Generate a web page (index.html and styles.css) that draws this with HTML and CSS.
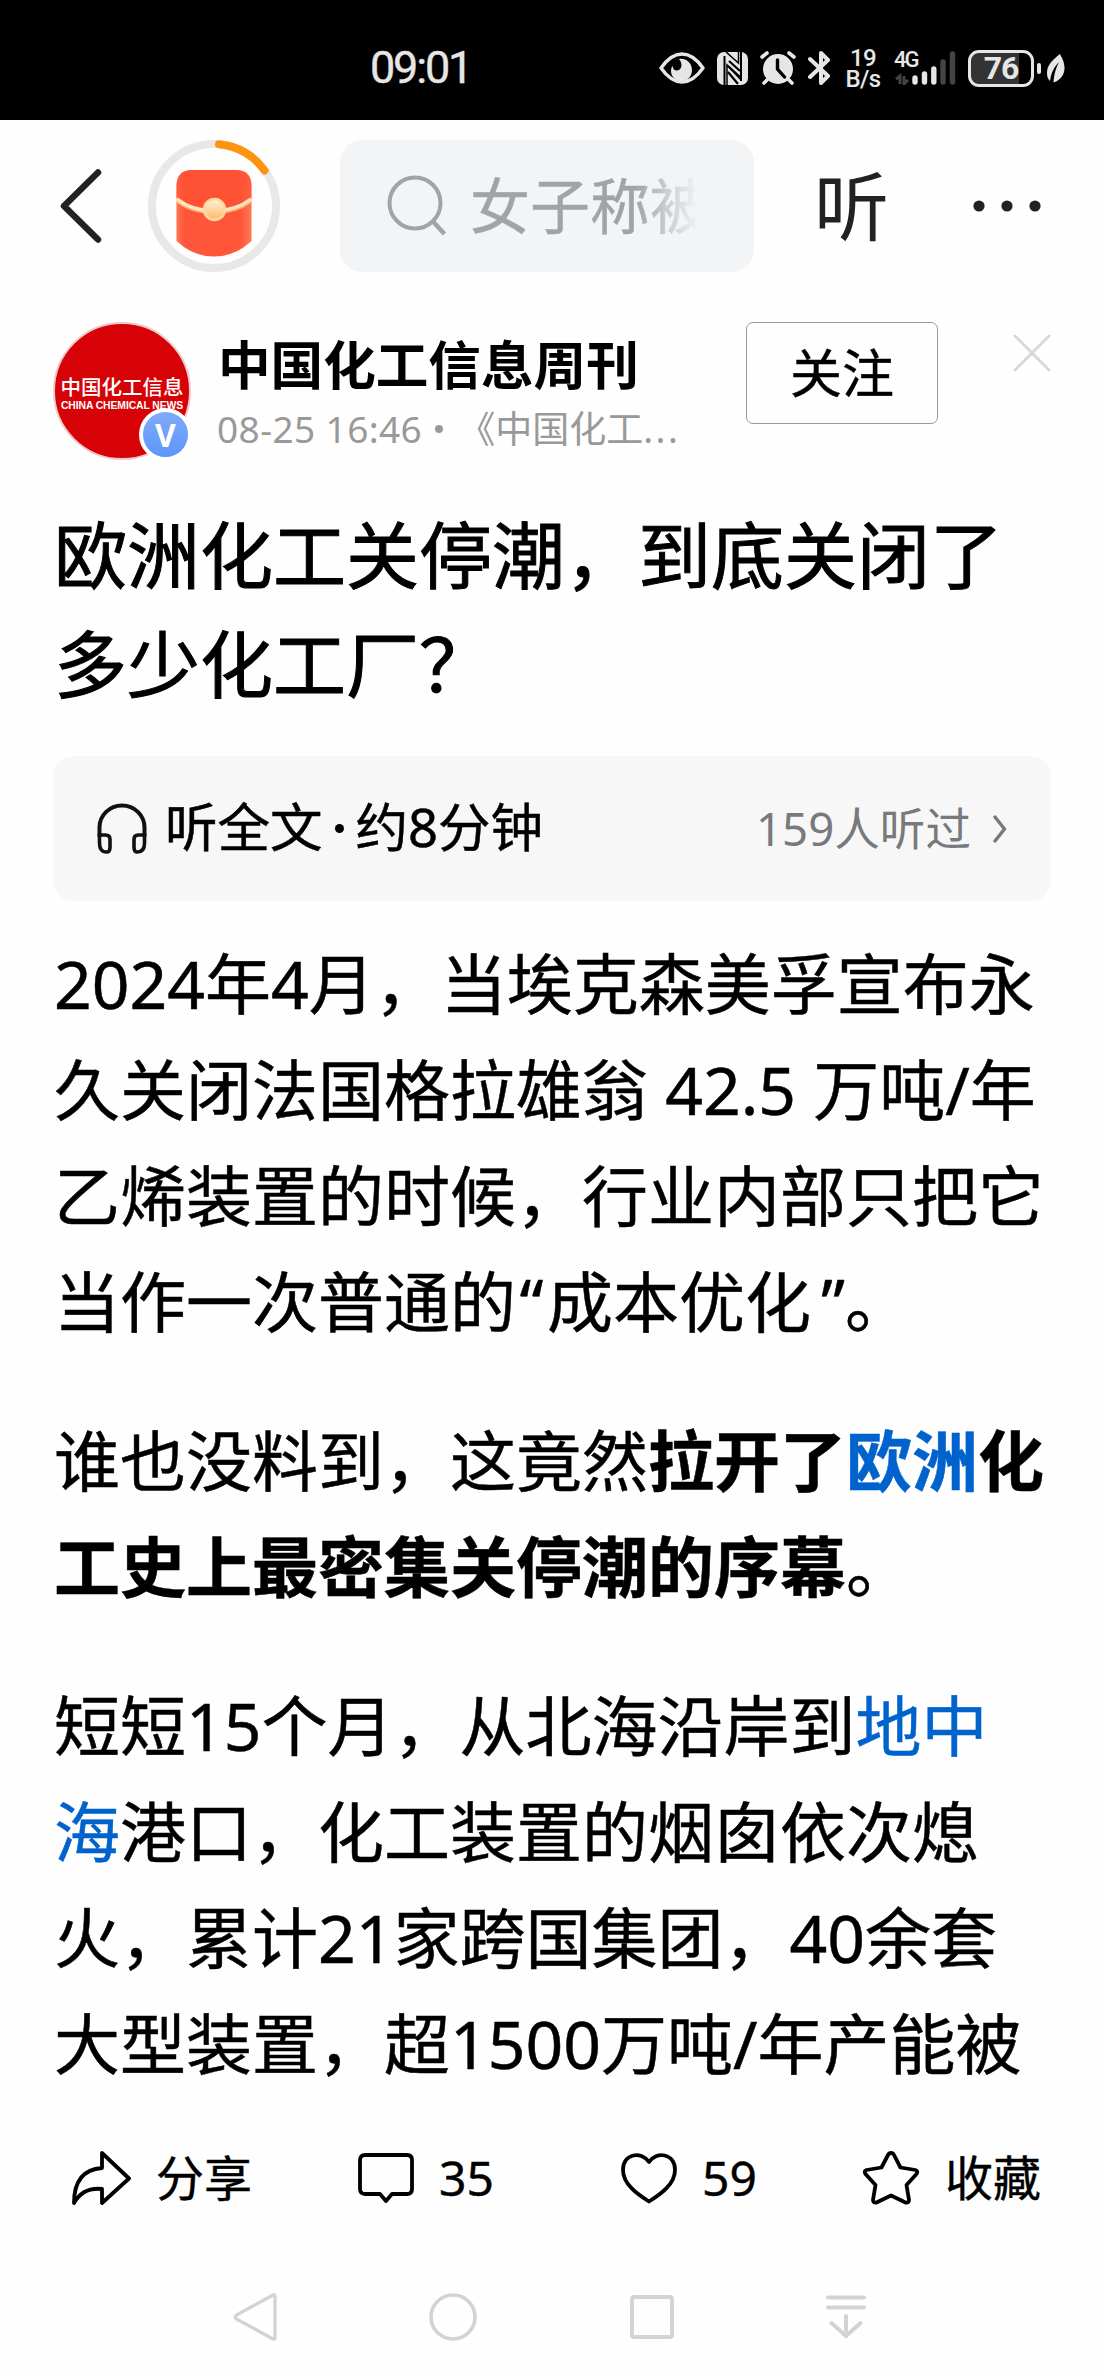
FILE: index.html
```html
<!DOCTYPE html>
<html lang="zh-CN">
<head>
    <meta charset="UTF-8">
    <meta name="viewport" content="width=device-width, initial-scale=1.0">
    <title>欧洲化工关停潮，到底关闭了多少化工厂？</title>
    <link rel="stylesheet" href="styles.css">
</head>
<body>
    <div class="status-bar">
        <span class="status-time">09:01</span>
        <div class="status-icons">
            <svg class="icon-eye" width="46" height="32" viewBox="0 0 46 32">
                <path d="M2 16C9 6 16 2 23 2s14 4 21 14c-7 10-14 14-21 14S9 26 2 16z" fill="none" stroke="#e6e6e6" stroke-width="3.4" stroke-linejoin="round"/>
                <path d="M20 7c7-1 13 4 13 11 0 6-4 11-10 11s-11-4-11-10c0-2 .5-4 1.500-5 .5 3 2 4.500 4 4.500 5 0 7-6 2.500-11.500z" fill="#e6e6e6"/>
            </svg>
            <svg class="icon-nfc" width="31" height="33" viewBox="0 0 31 33">
                <rect width="31" height="33" rx="7" fill="#e6e6e6"/>
                <path d="M7.500 4v29M24 0v29" stroke="#000" stroke-width="2"/>
                <path d="M8 1l15 15V1h-3v10zM23 32L10 16v16z" fill="#e6e6e6"/>
                <path d="M21.500 0v11L9 0M10 33V13l14 15" fill="none" stroke="#000" stroke-width="1.500"/>
                <path d="M11 14l12 11M11 20l10 12M12 9l11 10" stroke="#000" stroke-width="2.200"/>
            </svg>
            <svg class="icon-alarm" width="36" height="34" viewBox="0 0 36 34">
                <circle cx="18" cy="18" r="15" fill="#e6e6e6"/>
                <path d="M2 6l5-4M34 6l-5-4M7 29l-3 3M29 29l3 3" stroke="#e6e6e6" stroke-width="3.600" stroke-linecap="round"/>
                <path d="M17.500 9v9l7 8" fill="none" stroke="#000" stroke-width="3.400" stroke-linecap="round"/>
            </svg>
            <svg class="icon-bluetooth" width="23" height="36" viewBox="0 0 23 36">
                <path d="M2 9l18 17-7 7V3l7 7L2 27" fill="none" stroke="#e6e6e6" stroke-width="4" stroke-linejoin="round" stroke-linecap="round"/>
            </svg>
            <div class="net-speed">
                <span>19</span>
                <span>B/s</span>
            </div>
            <div class="signal">
                <span class="signal-type">4G</span>
                <svg width="63" height="34" viewBox="0 0 63 34">
                    <path d="M6 33V25l-4 3M10 25v8l4-4" fill="none" stroke="#444" stroke-width="3"/>
                    <path d="M21 27v4M30.500 23v8M39.800 18v13" stroke="#e6e6e6" stroke-width="5.400" stroke-linecap="round"/>
                    <path d="M49 11v20M58.500 3v28" stroke="#444" stroke-width="5.400" stroke-linecap="round"/>
                </svg>
            </div>
            <div class="battery">
                <span class="battery-level">76</span>
            </div>
            <span class="battery-tip"></span>
            <svg class="icon-leaf" width="18" height="29" viewBox="0 0 18 29">
                <path d="M13 0C4 7 0 12 0 19c0 4 1 6 3 8C4 19 7 13 12 8 9 14 7 20 6.500 28.500 14 26 18 20 17.500 13 17 7 15 4 13 0z" fill="#e6e6e6"/>
            </svg>
        </div>
    </div>

    <div class="top-bar">
        <svg class="back" width="42" height="76" viewBox="0 0 42 76">
            <path d="M38 4.500L4 38l34 33.500" fill="none" stroke="#222" stroke-width="6.500" stroke-linecap="round" stroke-linejoin="round"/>
        </svg>
        <svg class="packet" width="132" height="132" viewBox="0 0 132 132">
            <defs>
                <linearGradient id="red" x1="0" x2="1" y1="0" y2="0">
                    <stop offset="0" stop-color="#ff7350"/>
                    <stop offset="0.120" stop-color="#ff5639"/>
                    <stop offset="0.850" stop-color="#ff5639"/>
                    <stop offset="1" stop-color="#ff7657"/>
                </linearGradient>
                <linearGradient id="gold" x1="0" x2="0" y1="0" y2="1">
                    <stop offset="0" stop-color="#fff3dc"/>
                    <stop offset="1" stop-color="#ffb868"/>
                </linearGradient>
            </defs>
            <circle cx="66" cy="66" r="62" fill="none" stroke="#e8e8e8" stroke-width="8"/>
            <path d="M71 4.200A62 62 0 0 1 116.500 30.500" fill="none" stroke="#ff9310" stroke-width="8" stroke-linecap="round"/>
            <path d="M28.500 46q0-16 16-16h43q16 0 16 16v55Q87 116.500 66 116.500T28.500 101z" fill="url(#red)"/>
            <path d="M28.500 46q0-16 16-16h43q16 0 16 16v12Q88 69 66 69T28.500 58z" fill="#ff5033" opacity="0.600"/>
            <path d="M28.500 59Q44 71 66 71t37.500-12" fill="none" stroke="#ffe3bd" stroke-width="4"/>
            <path d="M28.500 62Q44 73.500 66 73.500t37.500-11.500" fill="none" stroke="#ffb35f" stroke-width="1.500"/>
            <circle cx="66.500" cy="69.500" r="10.500" fill="url(#gold)" stroke="#ffd9a0" stroke-width="2.500"/>
        </svg>
        <div class="search-box">
            <svg width="60" height="64" viewBox="0 0 60 64">
                <circle cx="28" cy="29" r="25.500" fill="none" stroke="#a1a3a7" stroke-width="4"/>
                <path d="M46 47.500L57.500 60" stroke="#a1a3a7" stroke-width="4.500"/>
            </svg>
            <span class="search-text">女子称被</span>
        </div>
        <span class="listen-btn">听</span>
        <svg class="more" width="68" height="12" viewBox="0 0 68 12">
            <circle cx="6" cy="6" r="5.600" fill="#222"/>
            <circle cx="34" cy="6" r="5.600" fill="#222"/>
            <circle cx="62" cy="6" r="5.600" fill="#222"/>
        </svg>
    </div>

    <div class="author">
        <div class="avatar">
            <span class="avatar-cn">中国化工信息</span>
            <span class="avatar-en">CHINA CHEMICAL NEWS</span>
            <span class="verified">V</span>
        </div>
        <div class="author-info">
            <div class="author-name">中国化工信息周刊</div>
            <div class="author-meta">
                <span class="meta-date">08-25 16:46</span>
                <i class="meta-dot"></i>
                <span class="meta-source">《中国化工<span class="ellipsis">...</span></span>
            </div>
        </div>
        <button class="follow-btn">关注</button>
        <svg class="close" width="38" height="38" viewBox="0 0 38 38">
            <path d="M2 2l34 34M36 2L2 36" stroke="#d8d8d8" stroke-width="3" stroke-linecap="round"/>
        </svg>
    </div>

    <h1 class="title">欧洲化工关停潮，到底关闭了多少化工厂？</h1>

    <div class="audio-card">
        <svg class="icon-headphones" width="50" height="52" viewBox="0 0 50 52">
            <path d="M2.500 34V24.500a22.500 22 0 0 1 45 0V34" fill="none" stroke="#111" stroke-width="4"/>
            <path d="M2.500 32h6q4.500 0 4.500 4.500v8q0 4.500-3.500 4.500-7 0-7-9zM47.500 32h-6q-4.500 0-4.500 4.500v8q0 4.500 3.500 4.500 7 0 7-9z" fill="none" stroke="#111" stroke-width="3.600"/>
        </svg>
        <span class="audio-title">听全文<b class="audio-dot"></b>约8分钟</span>
        <span class="audio-count">159人听过</span>
        <svg width="16" height="28" viewBox="0 0 16 28">
            <path d="M3 2l9.500 12L3 26" fill="none" stroke="#77797d" stroke-width="3.400" stroke-linecap="round" stroke-linejoin="round"/>
        </svg>
    </div>

    <div class="content">
        <p>2024年4月，当埃克森美孚宣布永久关闭法国格拉雄翁 42.5 万吨/年乙烯装置的时候，行业内部只把它当作一次普通的<span class="quote">“</span>成本优化<span class="quote quote-end">”</span>。</p>
        <p>谁也没料到，这竟然<strong>拉开了<a>欧洲</a>化工史上最密集关停潮的序幕</strong>。</p>
        <p>短短15个月，从北海沿岸到<a>地中海</a>港口，化工装置的烟囱依次熄火，累计21家跨国集团，40余套大型装置，超1500万吨/年产能被</p>
    </div>

    <div class="action-bar">
        <div class="action share">
            <svg width="60" height="56" viewBox="0 0 60 56">
                <path d="M31 3L58 28.500 31 53V39Q12 37 3 53 3 20 31 18z" fill="none" stroke="#000" stroke-width="3.800" stroke-linejoin="round"/>
            </svg>
            <span>分享</span>
        </div>
        <div class="action comment">
            <svg width="56" height="52" viewBox="0 0 56 52">
                <path d="M7 3h42q5 0 5 5v29q0 5-5 5H34l-6 7-6-7H7q-5 0-5-5V8q0-5 5-5z" fill="none" stroke="#000" stroke-width="3.800" stroke-linejoin="round"/>
            </svg>
            <span>35</span>
        </div>
        <div class="action like">
            <svg width="56" height="52" viewBox="0 0 56 52">
                <path d="M28 10C21-1 2 1 2 18c0 14 14 24 26 31.500C40 42 54 32 54 18 54 1 35-1 28 10z" fill="none" stroke="#000" stroke-width="3.800" stroke-linejoin="round"/>
            </svg>
            <span>59</span>
        </div>
        <div class="action favorite">
            <svg width="58" height="56" viewBox="0 0 58 56">
                <path d="M29 3Q31 3 32 5l6.500 12.500 15 2.500q3 1 1 4L44.500 35l2.500 15q0 3-3.500 2.500L29 45.500 14.500 52.500Q11 53 11 50l2.500-15L3.500 24q-2-3 1-4l15-2.500L26 5q1-2 3-2z" fill="none" stroke="#000" stroke-width="3.800" stroke-linejoin="round"/>
            </svg>
            <span>收藏</span>
        </div>
    </div>

    <div class="nav-bar">
        <svg width="44" height="50" viewBox="0 0 44 50">
            <path d="M40 3Q42 2 42 5v40q0 3-2 2L3.500 27q-2.500-2 0-4z" fill="none" stroke="#d3d3d3" stroke-width="3.400" stroke-linejoin="round"/>
        </svg>
        <svg width="48" height="48" viewBox="0 0 48 48">
            <circle cx="24" cy="24" r="22" fill="none" stroke="#d3d3d3" stroke-width="3.600"/>
        </svg>
        <svg width="44" height="44" viewBox="0 0 44 44">
            <rect x="2" y="2" width="40" height="40" rx="2" fill="none" stroke="#d3d3d3" stroke-width="3.800"/>
        </svg>
        <svg width="40" height="44" viewBox="0 0 40 44">
            <path d="M2 2.500h36M2 12.500h36M20 21v19M5.500 28L20 41l14.500-13" fill="none" stroke="#d3d3d3" stroke-width="4" stroke-linecap="round"/>
        </svg>
    </div>
</body>
</html>
```

FILE: styles.css
```css
* {
    margin: 0;
    padding: 0;
    box-sizing: border-box;
}

body {
    width: 1104px;
    height: 2376px;
    overflow: hidden;
    display: flex;
    flex-direction: column;
    background-color: #fefefe;
    color: #000;
    font-family: "Noto Sans", "Noto Sans CJK SC", sans-serif;
}

svg {
    display: block;
    flex-shrink: 0;
}

/* Barra de estado */
.status-bar {
    height: 120px;
    padding: 16px 39px 0 370px;
    background-color: #000;
    color: #e6e6e6;
    font-family: Roboto, "Noto Sans", sans-serif;
    display: flex;
    align-items: center;
    justify-content: space-between;
    flex-shrink: 0;
}

.status-time {
    font-size: 45px;
    line-height: 60px;
    letter-spacing: -2.2px;
    -webkit-text-stroke: 0.4px;
}

.status-icons {
    display: flex;
    align-items: center;
}

.icon-nfc {
    margin-left: 12px;
}

.icon-alarm {
    margin-left: 12px;
}

.icon-bluetooth {
    margin-left: 12px;
}

.net-speed {
    width: 36px;
    margin-left: 14px;
    padding-top: 2px;
    display: flex;
    flex-direction: column;
    align-items: center;
    font-size: 24px;
    font-weight: 500;
    line-height: 21px;
    letter-spacing: -0.6px;
}

.signal {
    position: relative;
    margin-left: 13px;
}

.signal-type {
    position: absolute;
    left: 0;
    top: -2px;
    font-size: 22px;
    font-weight: 500;
    line-height: 22px;
    letter-spacing: -2px;
}

.battery {
    width: 66px;
    height: 37px;
    margin-left: 11px;
    border: 3px solid #e6e6e6;
    border-radius: 11px;
    background: linear-gradient(to right, #333 48px, #000 48px);
    text-align: center;
}

.battery-level {
    font-size: 32px;
    font-weight: 700;
    line-height: 31px;
    letter-spacing: -1px;
}

.battery-tip {
    width: 4px;
    height: 11px;
    margin-left: 3px;
    border-radius: 2px;
    background-color: #e6e6e6;
}

.icon-leaf {
    margin-left: 6px;
}

/* Cabecera */
.top-bar {
    height: 172px;
    padding-left: 60px;
    display: flex;
    align-items: center;
    flex-shrink: 0;
}

.packet {
    margin-left: 46px;
}

.search-box {
    width: 414px;
    height: 132px;
    margin-left: 60px;
    padding-left: 47px;
    border-radius: 22px;
    background-color: #f3f4f6;
    display: flex;
    align-items: center;
}

.search-text {
    width: 225px;
    margin-left: 23px;
    overflow: hidden;
    white-space: nowrap;
    font-size: 60px;
    line-height: 80px;
    color: transparent;
    background: linear-gradient(to right, #a1a3a7 165px, rgba(161, 163, 167, 0.1) 222px);
    -webkit-background-clip: text;
    background-clip: text;
    -webkit-text-stroke: 0.5px transparent;
}

.listen-btn {
    margin-left: 60px;
    font-size: 75px;
    line-height: 90px;
    color: #222;
}

.more {
    margin-left: 84px;
}

/* Autor */
.author {
    height: 168px;
    padding: 30px 53px 0;
    display: flex;
    align-items: flex-start;
    flex-shrink: 0;
}

.avatar {
    position: relative;
    width: 138px;
    height: 138px;
    border: 2px solid #eec8cb;
    border-radius: 50%;
    background-color: #d60207;
    color: #fff;
    display: flex;
    flex-direction: column;
    align-items: center;
    padding-top: 49px;
    flex-shrink: 0;
    white-space: nowrap;
}

.avatar-cn {
    font-size: 20.5px;
    line-height: 28px;
    font-weight: 500;
}

.avatar-en {
    font-family: "Liberation Sans", Arial, sans-serif;
    font-size: 10.4px;
    line-height: 10px;
    font-weight: bold;
    letter-spacing: -0.1px;
}

.verified {
    position: absolute;
    right: -3px;
    bottom: -3px;
    width: 53px;
    height: 53px;
    border: 4px solid #fff;
    border-radius: 50%;
    background: linear-gradient(#80aaf8, #5e96fb);
    font-size: 32px;
    font-weight: 700;
    line-height: 45px;
    text-align: center;
}

.author-info {
    width: 470px;
    margin-left: 26px;
    padding-top: 8px;
}

.author-name {
    margin-left: 1px;
    font-size: 52.6px;
    font-weight: 700;
    line-height: 70px;
    white-space: nowrap;
}

.author-meta {
    display: flex;
    align-items: center;
    font-size: 37px;
    line-height: 58px;
    color: #999;
    white-space: nowrap;
}

.meta-date {
    letter-spacing: 0.4px;
}

.meta-dot {
    width: 8px;
    height: 8px;
    margin-left: 13px;
    border-radius: 50%;
    background-color: #999;
}

.meta-source {
    margin-left: 15px;
}

.ellipsis {
    letter-spacing: 2.5px;
}

.follow-btn {
    width: 192px;
    height: 102px;
    margin-left: 59px;
    border: 1px solid #999;
    border-radius: 7px;
    background-color: #fefefe;
    font-family: inherit;
    font-size: 52px;
    line-height: 70px;
    color: #000;
    -webkit-text-stroke: 0.5px;
}

.close {
    margin-top: 12px;
    margin-left: 75px;
}

/* Artículo */
.title {
    margin: 40px 53px 0 54px;
    font-size: 73px;
    font-weight: 400;
    line-height: 109px;
    flex-shrink: 0;
    -webkit-text-stroke: 1px;
}

.audio-card {
    height: 145px;
    margin: 38px 53px 0;
    padding: 0 43px 0 44px;
    border-radius: 20px;
    background-color: #f7f7f7;
    display: flex;
    align-items: center;
    flex-shrink: 0;
}

.audio-title {
    margin-left: 18px;
    padding-bottom: 3px;
    font-size: 52.5px;
    line-height: 70px;
    -webkit-text-stroke: 0.5px;
}

.audio-dot {
    display: inline-block;
    width: 9px;
    height: 9px;
    margin: 0 12px 14px;
    border-radius: 50%;
    background-color: #000;
}

.audio-count {
    margin-left: auto;
    margin-right: 21px;
    padding-bottom: 2px;
    font-size: 45.6px;
    line-height: 60px;
    color: #77797d;
}

.content {
    height: 1188px;
    margin: 29px 53px 0 54px;
    overflow: hidden;
    flex-shrink: 0;
}

.content p {
    font-size: 66px;
    line-height: 106px;
    margin-bottom: 53px;
    -webkit-text-stroke: 0.5px;
}

.content a {
    color: #0062cc;
}

.quote {
    display: inline-block;
    width: 31px;
    text-align: center;
}

.quote-end {
    width: 34px;
    text-align: right;
}

/* Barra de acciones */
.action-bar {
    height: 120px;
    padding-left: 71px;
    display: flex;
    align-items: center;
    font-size: 48px;
    line-height: 64px;
    flex-shrink: 0;
}

.action {
    display: flex;
    align-items: center;
    gap: 25px;
}

.action span {
    -webkit-text-stroke: 0.4px;
}

.share {
    width: 287px;
}

.comment {
    width: 263px;
}

.like {
    width: 241px;
}

/* Navegación del sistema */
.nav-bar {
    height: 120px;
    margin-top: 19px;
    padding: 0 238px 0 233px;
    display: flex;
    align-items: center;
    justify-content: space-between;
    flex-shrink: 0;
}
```
